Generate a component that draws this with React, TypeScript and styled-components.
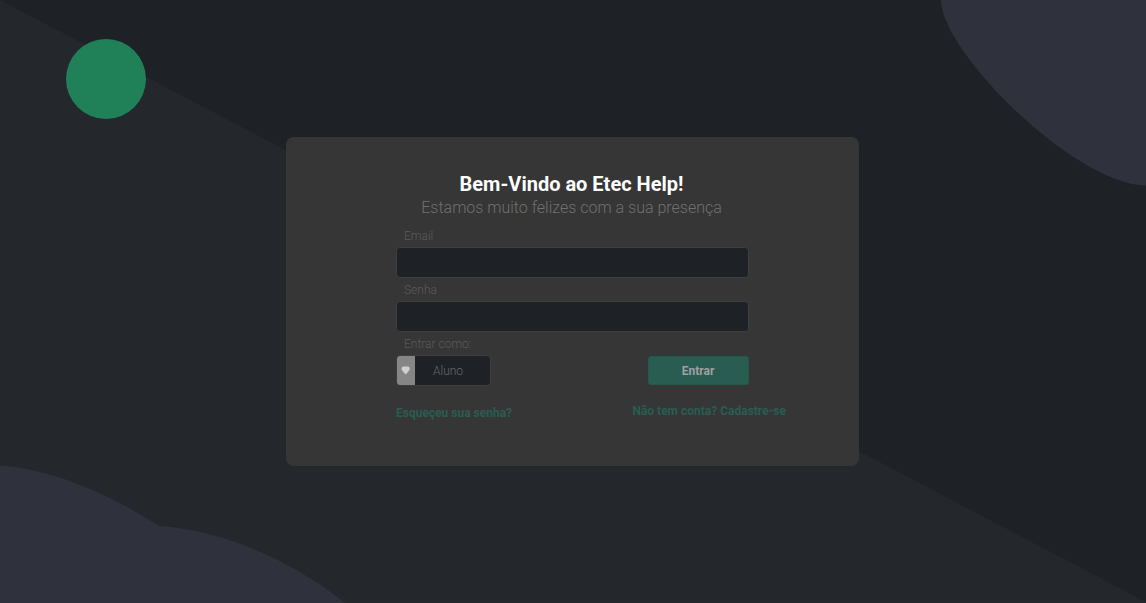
import React from "react";
import styled, { createGlobalStyle } from "styled-components";

const GlobalStyle = createGlobalStyle`
  * { box-sizing: border-box; }
  body { margin: 0; overflow: hidden; background: #1e2226; }
`;

const Page = styled.main`
  position: relative;
  width: 100vw;
  height: 100vh;
  padding-top: 137px;
  padding-left: 286px;
  overflow: hidden;
  background: #1e2226;
  font-family: Roboto, "Liberation Sans", sans-serif;
`;

const Backdrop = styled.svg`
  position: absolute;
  top: 0;
  left: 0;
`;

const Card = styled.form`
  position: relative;
  display: flex;
  flex-direction: column;
  width: 573px;
  height: 329px;
  padding: 35px 110px 0;
  border-radius: 8px;
  background: #363636;
`;

const Title = styled.h1`
  margin: 0 2px 0 0;
  font-size: 20px;
  font-weight: 700;
  line-height: 24px;
  text-align: center;
  white-space: nowrap;
  color: #fff;
`;

const Subtitle = styled.p`
  margin: 0 2px 8px 0;
  font-size: 16px;
  font-weight: 300;
  line-height: 24px;
  text-align: center;
  white-space: nowrap;
  color: #707070;
`;

const Label = styled.label`
  padding-left: 8px;
  font-size: 12px;
  font-weight: 300;
  line-height: 16px;
  color: #5a5a5a;
`;

const Input = styled.input`
  width: 353px;
  height: 31px;
  margin: 3px 0 4px;
  padding: 0 10px;
  border: 1px solid #3e3e3e;
  border-radius: 4px;
  outline: none;
  background: #1e2226;
  color: #707070;
`;

const Actions = styled.div`
  display: flex;
  justify-content: space-between;
  width: 353px;
  margin-top: 3px;
`;

const Select = styled.div`
  display: flex;
  width: 95px;
  height: 31px;
  border: 1px solid #3e3e3e;
  border-radius: 4px;
  overflow: hidden;
  background: #1e2226;
`;

const SelectHandle = styled.span`
  display: flex;
  align-items: center;
  justify-content: center;
  width: 18px;
  background: #868686;
`;

const SelectValue = styled.span`
  flex: 1;
  padding-right: 9px;
  font-size: 12px;
  font-weight: 300;
  line-height: 31px;
  text-align: center;
  color: #686868;
`;

const Submit = styled.button`
  width: 101px;
  height: 29px;
  margin-top: 1px;
  padding: 0 1px 0 0;
  border: 1px solid #23594c;
  border-radius: 3px;
  background: #295d52;
  font: 700 12px Roboto, sans-serif;
  color: #a0a0a0;
`;

const Links = styled.div`
  display: flex;
  justify-content: space-between;
  width: 390px;
  margin-top: 17px;
`;

const Link = styled.a<{ $drop?: number }>`
  margin-top: ${({ $drop = 0 }) => $drop}px;
  font-size: 12px;
  font-weight: 700;
  line-height: 16px;
  white-space: nowrap;
  color: #295d52;
`;

export default function App() {
  return (
    <Page>
      <GlobalStyle />
      <Backdrop width="1146" height="603" viewBox="0 0 1146 603" aria-hidden="true">
        <path d="M0 0L1146 602V603H0Z" fill="#24282c" />
        <path d="M941 0C941 52 1076 185.5 1146 185.5V0Z" fill="#2f313d" />
        <path d="M0 465.5C51 469 108 493 159 526C222 530 292 560 345 603H0Z" fill="#2f313d" />
        <circle cx="106" cy="79" r="40" fill="#208158" />
      </Backdrop>
      <Card onSubmit={(event: React.FormEvent) => event.preventDefault()}>
        <Title>Bem-Vindo ao Etec Help!</Title>
        <Subtitle>Estamos muito felizes com a sua presença</Subtitle>
        <Label htmlFor="email">Email</Label>
        <Input id="email" type="email" />
        <Label htmlFor="senha">Senha</Label>
        <Input id="senha" type="password" />
        <Label as="span">Entrar como:</Label>
        <Actions>
          <Select>
            <SelectHandle>
              <svg width="10" height="9" viewBox="0 0 10 9">
                <path d="M2.6 .6H6.7Q8.8 .6 8.8 2.8Q8.8 3.8 7.7 5.1L5.7 7.6Q4.7 8.8 3.7 7.6L1.6 5.1Q.5 3.8 .5 2.8Q.5 .6 2.6 .6Z" fill="#cfcfcf" />
              </svg>
            </SelectHandle>
            <SelectValue>Aluno</SelectValue>
          </Select>
          <Submit type="submit">Entrar</Submit>
        </Actions>
        <Links>
          <Link $drop={2}>Esqueçeu sua senha?</Link>
          <Link>Não tem conta? Cadastre-se</Link>
        </Links>
      </Card>
    </Page>
  );
}
